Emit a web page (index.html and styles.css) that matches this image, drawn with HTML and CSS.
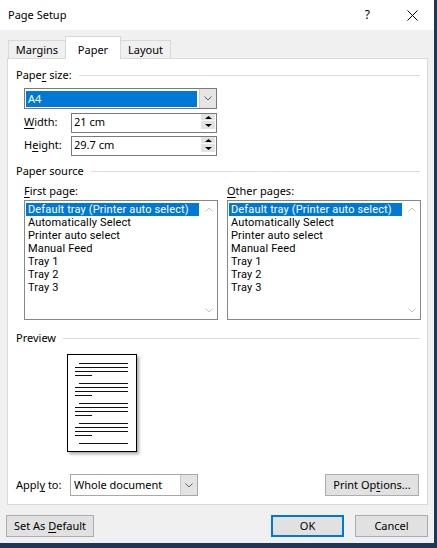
FILE: index.html
```html
<!DOCTYPE html>
<html>
<head>
<meta charset="utf-8">
<title>Page Setup</title>
<link rel="stylesheet" href="styles.css">
</head>
<body>
<div class="dialog">
  <div class="titlebar">
    <span class="title">Page Setup</span>
    <span class="help">?</span>
    <svg class="close" width="11" height="11" viewBox="0 0 11 11"><path d="M0.5 0.5L10.5 10.5M10.5 0.5L0.5 10.5" stroke="#000" stroke-width="1" fill="none"/></svg>
  </div>

  <div class="tabs">
    <div class="tab t-margins">Margins</div>
    <div class="tab t-paper active">Paper</div>
    <div class="tab t-layout">Layout</div>
  </div>

  <div class="panel">
    <div class="group-head g1"><span>Pape<u>r</u> size:</span></div>

    <div class="combo paper-combo">
      <div class="combo-value"><span class="hl">A4</span></div>
      <div class="combo-btn"><svg width="8" height="5" viewBox="0 0 8 5"><path d="M0.5 0.5L4 4L7.5 0.5" stroke="#606060" fill="none"/></svg></div>
    </div>

    <div class="field-row r-width">
      <span class="field-label"><u>W</u>idth:</span>
      <div class="spin">
        <span class="spin-text">21 cm</span>
        <div class="spin-btns">
          <div class="sb sb-up"><svg width="7" height="3" viewBox="0 0 7 3"><polygon points="0,3 3.5,0 7,3" fill="#000"/></svg></div>
          <div class="sb sb-down"><svg width="7" height="3" viewBox="0 0 7 3"><polygon points="0,0 7,0 3.5,3" fill="#000"/></svg></div>
        </div>
      </div>
    </div>

    <div class="field-row r-height">
      <span class="field-label">H<u>e</u>ight:</span>
      <div class="spin">
        <span class="spin-text">29.7 cm</span>
        <div class="spin-btns">
          <div class="sb sb-up"><svg width="7" height="3" viewBox="0 0 7 3"><polygon points="0,3 3.5,0 7,3" fill="#000"/></svg></div>
          <div class="sb sb-down"><svg width="7" height="3" viewBox="0 0 7 3"><polygon points="0,0 7,0 3.5,3" fill="#000"/></svg></div>
        </div>
      </div>
    </div>

    <div class="group-head g2"><span>Paper source</span></div>

    <div class="sources">
      <div class="source-col">
        <div class="list-label"><u>F</u>irst page:</div>
        <div class="listbox">
          <div class="items">
            <div class="item sel">Default tray (Printer auto select)</div>
            <div class="item">Automatically Select</div>
            <div class="item">Printer auto select</div>
            <div class="item">Manual Feed</div>
            <div class="item">Tray 1</div>
            <div class="item">Tray 2</div>
            <div class="item">Tray 3</div>
          </div>
          <div class="vscroll">
            <div class="sarrow"><svg width="8" height="5" viewBox="0 0 8 5"><path d="M0.5 4.5L4 1L7.5 4.5" stroke="#c4c4c4" fill="none"/></svg></div>
            <div class="sarrow"><svg width="8" height="5" viewBox="0 0 8 5"><path d="M0.5 0.5L4 4L7.5 0.5" stroke="#c4c4c4" fill="none"/></svg></div>
          </div>
        </div>
      </div>
      <div class="source-col">
        <div class="list-label"><u>O</u>ther pages:</div>
        <div class="listbox">
          <div class="items">
            <div class="item sel">Default tray (Printer auto select)</div>
            <div class="item">Automatically Select</div>
            <div class="item">Printer auto select</div>
            <div class="item">Manual Feed</div>
            <div class="item">Tray 1</div>
            <div class="item">Tray 2</div>
            <div class="item">Tray 3</div>
          </div>
          <div class="vscroll">
            <div class="sarrow"><svg width="8" height="5" viewBox="0 0 8 5"><path d="M0.5 4.5L4 1L7.5 4.5" stroke="#c4c4c4" fill="none"/></svg></div>
            <div class="sarrow"><svg width="8" height="5" viewBox="0 0 8 5"><path d="M0.5 0.5L4 4L7.5 0.5" stroke="#c4c4c4" fill="none"/></svg></div>
          </div>
        </div>
      </div>
    </div>

    <div class="group-head g3"><span>Preview</span></div>

    <div class="page">
      <svg width="68" height="96" viewBox="0 0 68 96">
        <g fill="#111">
          <rect x="11" y="8" width="49" height="1"/>
          <rect x="7" y="12" width="53" height="1"/>
          <rect x="7" y="16" width="53" height="1"/>
          <rect x="7" y="20" width="17" height="1"/>
          <rect x="11" y="28" width="49" height="1"/>
          <rect x="7" y="32" width="53" height="1"/>
          <rect x="7" y="36" width="53" height="1"/>
          <rect x="7" y="40" width="17" height="1"/>
          <rect x="11" y="48" width="49" height="1"/>
          <rect x="7" y="52" width="53" height="1"/>
          <rect x="7" y="56" width="53" height="1"/>
          <rect x="7" y="60" width="17" height="1"/>
          <rect x="11" y="68" width="49" height="1"/>
          <rect x="7" y="72" width="53" height="1"/>
          <rect x="7" y="76" width="53" height="1"/>
          <rect x="7" y="80" width="17" height="1"/>
          <rect x="11" y="88" width="49" height="1"/>
        </g>
      </svg>
    </div>

    <div class="apply-row">
      <span class="apply-label">Appl<u>y</u> to:</span>
      <div class="combo apply-combo">
        <div class="combo-value"><span class="plain">Whole document</span></div>
        <div class="combo-btn"><svg width="8" height="5" viewBox="0 0 8 5"><path d="M0.5 0.5L4 4L7.5 0.5" stroke="#606060" fill="none"/></svg></div>
      </div>
      <button class="btn print-btn">Print Op<u>t</u>ions...</button>
    </div>
  </div>

  <div class="footer">
    <button class="btn default-btn">Set As <u>D</u>efault</button>
    <button class="btn ok-btn">OK</button>
    <button class="btn cancel-btn">Cancel</button>
  </div>
</div>
</body>
</html>
```

FILE: styles.css
```css
* { box-sizing: border-box; }

html, body {
  margin: 0;
  padding: 0;
}

body {
  width: 437px;
  height: 548px;
  overflow: hidden;
  background: #1f3654;
  font-family: "Noto Sans", "Open Sans", sans-serif;
  font-size: 11px;
  color: #000;
}

u { text-decoration: underline; text-underline-offset: 2px; }

.dialog {
  width: 434px;
  height: 543px;
  background: #f0f0f0;
  display: flex;
  flex-direction: column;
}

/* Title bar */
.titlebar {
  height: 30px;
  flex: none;
  background: #fff;
  display: flex;
  align-items: center;
  padding-left: 8px;
  padding-right: 16px;
}
.title { flex: 1; line-height: 16px; }
.help { margin-right: 37px; font-size: 12px; line-height: 16px; }
.close { display: block; }

/* Tabs */
.tabs {
  height: 28px;
  flex: none;
  display: flex;
  align-items: flex-end;
  padding-left: 8px;
}
.tab {
  height: 18px;
  line-height: 17px;
  text-align: center;
  border: 1px solid #d9d9d9;
  border-bottom: none;
  background: #f0f0f0;
}
.t-margins { width: 57px; border-right: none; }
.t-layout { width: 50px; border-left: none; }
.t-paper.active {
  width: 56px;
  height: 23px;
  padding-top: 4px;
  background: #fff;
  margin-bottom: -1px;
  position: relative;
  z-index: 1;
}

/* Panel */
.panel {
  flex: none;
  margin-left: 7px;
  width: 421px;
  background: #fff;
  border: 1px solid #d9d9d9;
  padding: 0 7px 8px 8px;
  display: flex;
  flex-direction: column;
  align-items: flex-start;
}

.group-head {
  align-self: stretch;
  display: flex;
  align-items: center;
  height: 14px;
  line-height: 14px;
  white-space: nowrap;
}
.group-head::after {
  content: "";
  flex: 1;
  height: 1px;
  background: #dcdcdc;
  margin-left: 7px;
}
.g1 { margin-top: 9px; }
.g2 { margin-top: 8px; }
.g3 { margin-top: 11px; }

/* Combo boxes */
.combo {
  display: flex;
  background: #fff;
  border: 1px solid #7a7a7a;
}
.paper-combo {
  margin-top: 6px;
  margin-left: 8px;
  width: 193px;
  height: 21px;
}
.paper-combo .combo-value {
  flex: 1;
  padding: 2px 1px 1px 1px;
  display: flex;
}
.hl {
  flex: 1;
  background: #0078d7;
  color: #fff;
  line-height: 16px;
  padding-left: 2px;
}
.combo-btn {
  width: 17px;
  background: #e5e5e5;
  border-left: 1px solid #cfcfcf;
  display: flex;
  align-items: center;
  justify-content: center;
}
.paper-combo .combo-btn { margin-left: 1px; }

/* Width / Height rows */
.field-row {
  display: flex;
  align-items: flex-start;
  margin-left: 8px;
  height: 20px;
}
.r-width { margin-top: 4px; }
.r-height { margin-top: 3px; }
.field-label {
  width: 47px;
  padding-top: 1px;
  line-height: 16px;
}
.spin {
  width: 146px;
  height: 20px;
  border: 1px solid #7a7a7a;
  display: flex;
  align-items: flex-start;
}
.spin-text {
  flex: 1;
  line-height: 16px;
  padding-left: 2px;
}
.spin-btns {
  width: 14px;
  margin-right: 1px;
  display: flex;
  flex-direction: column;
}
.sb {
  background: #e3e3e3;
  display: flex;
  align-items: center;
  justify-content: center;
}
.sb svg { display: block; }
.sb-up { height: 7px; border-bottom: 1px solid #f7f7f7; }
.sb-down { height: 8px; }

/* Paper source lists */
.sources {
  display: flex;
  gap: 9px;
  margin-left: 8px;
  margin-top: 6px;
}
.source-col {
  width: 194px;
  display: flex;
  flex-direction: column;
}
.list-label {
  height: 14px;
  line-height: 14px;
}
.listbox {
  margin-top: 2px;
  height: 120px;
  border: 1px solid #828790;
  display: flex;
}
.items {
  flex: 1;
  padding: 2px 1px 0 1px;
}
.item {
  height: 13px;
  line-height: 13px;
  padding-left: 2px;
  white-space: nowrap;
  font-family: Roboto, "Noto Sans", sans-serif;
  letter-spacing: 0.15px;
}
.item.sel {
  background: #0078d7;
  color: #fff;
}
.vscroll {
  width: 17px;
  display: flex;
  flex-direction: column;
  justify-content: space-between;
}
.sarrow {
  height: 17px;
  display: flex;
  align-items: center;
  justify-content: center;
}
.sarrow svg { display: block; }

/* Preview page */
.page {
  margin-top: 9px;
  margin-left: 51px;
  width: 70px;
  height: 98px;
  border: 1px solid #000;
  background: #fff;
  box-shadow: 2px 2px 3px rgba(0, 0, 0, 0.35);
}
.page svg { display: block; }

/* Apply row */
.apply-row {
  align-self: stretch;
  margin-top: 22px;
  margin-right: 1px;
  height: 22px;
  display: flex;
  align-items: stretch;
}
.apply-label {
  width: 54px;
  line-height: 22px;
}
.apply-combo {
  width: 128px;
  height: 22px;
  border-color: #a8a8a8;
}
.apply-combo .combo-value {
  flex: 1;
  line-height: 20px;
  padding-left: 3px;
}
.apply-combo .combo-btn {
  background: #e3e3e3;
  border-left: 1px solid #c8c8c8;
}

/* Buttons */
.btn {
  font-family: inherit;
  font-size: 11px;
  color: #000;
  background: #e1e1e1;
  border: 1px solid #adadad;
  height: 22px;
  line-height: 20px;
  padding: 0;
  margin: 0;
  text-align: center;
}
.print-btn {
  margin-left: auto;
  width: 94px;
}

.footer {
  margin-top: 10px;
  padding: 0 6px;
  display: flex;
  align-items: flex-start;
}
.default-btn { width: 88px; }
.ok-btn {
  margin-left: auto;
  width: 73px;
  border: 2px solid #0078d7;
  line-height: 18px;
}
.cancel-btn {
  margin-left: 11px;
  width: 73px;
}
```
